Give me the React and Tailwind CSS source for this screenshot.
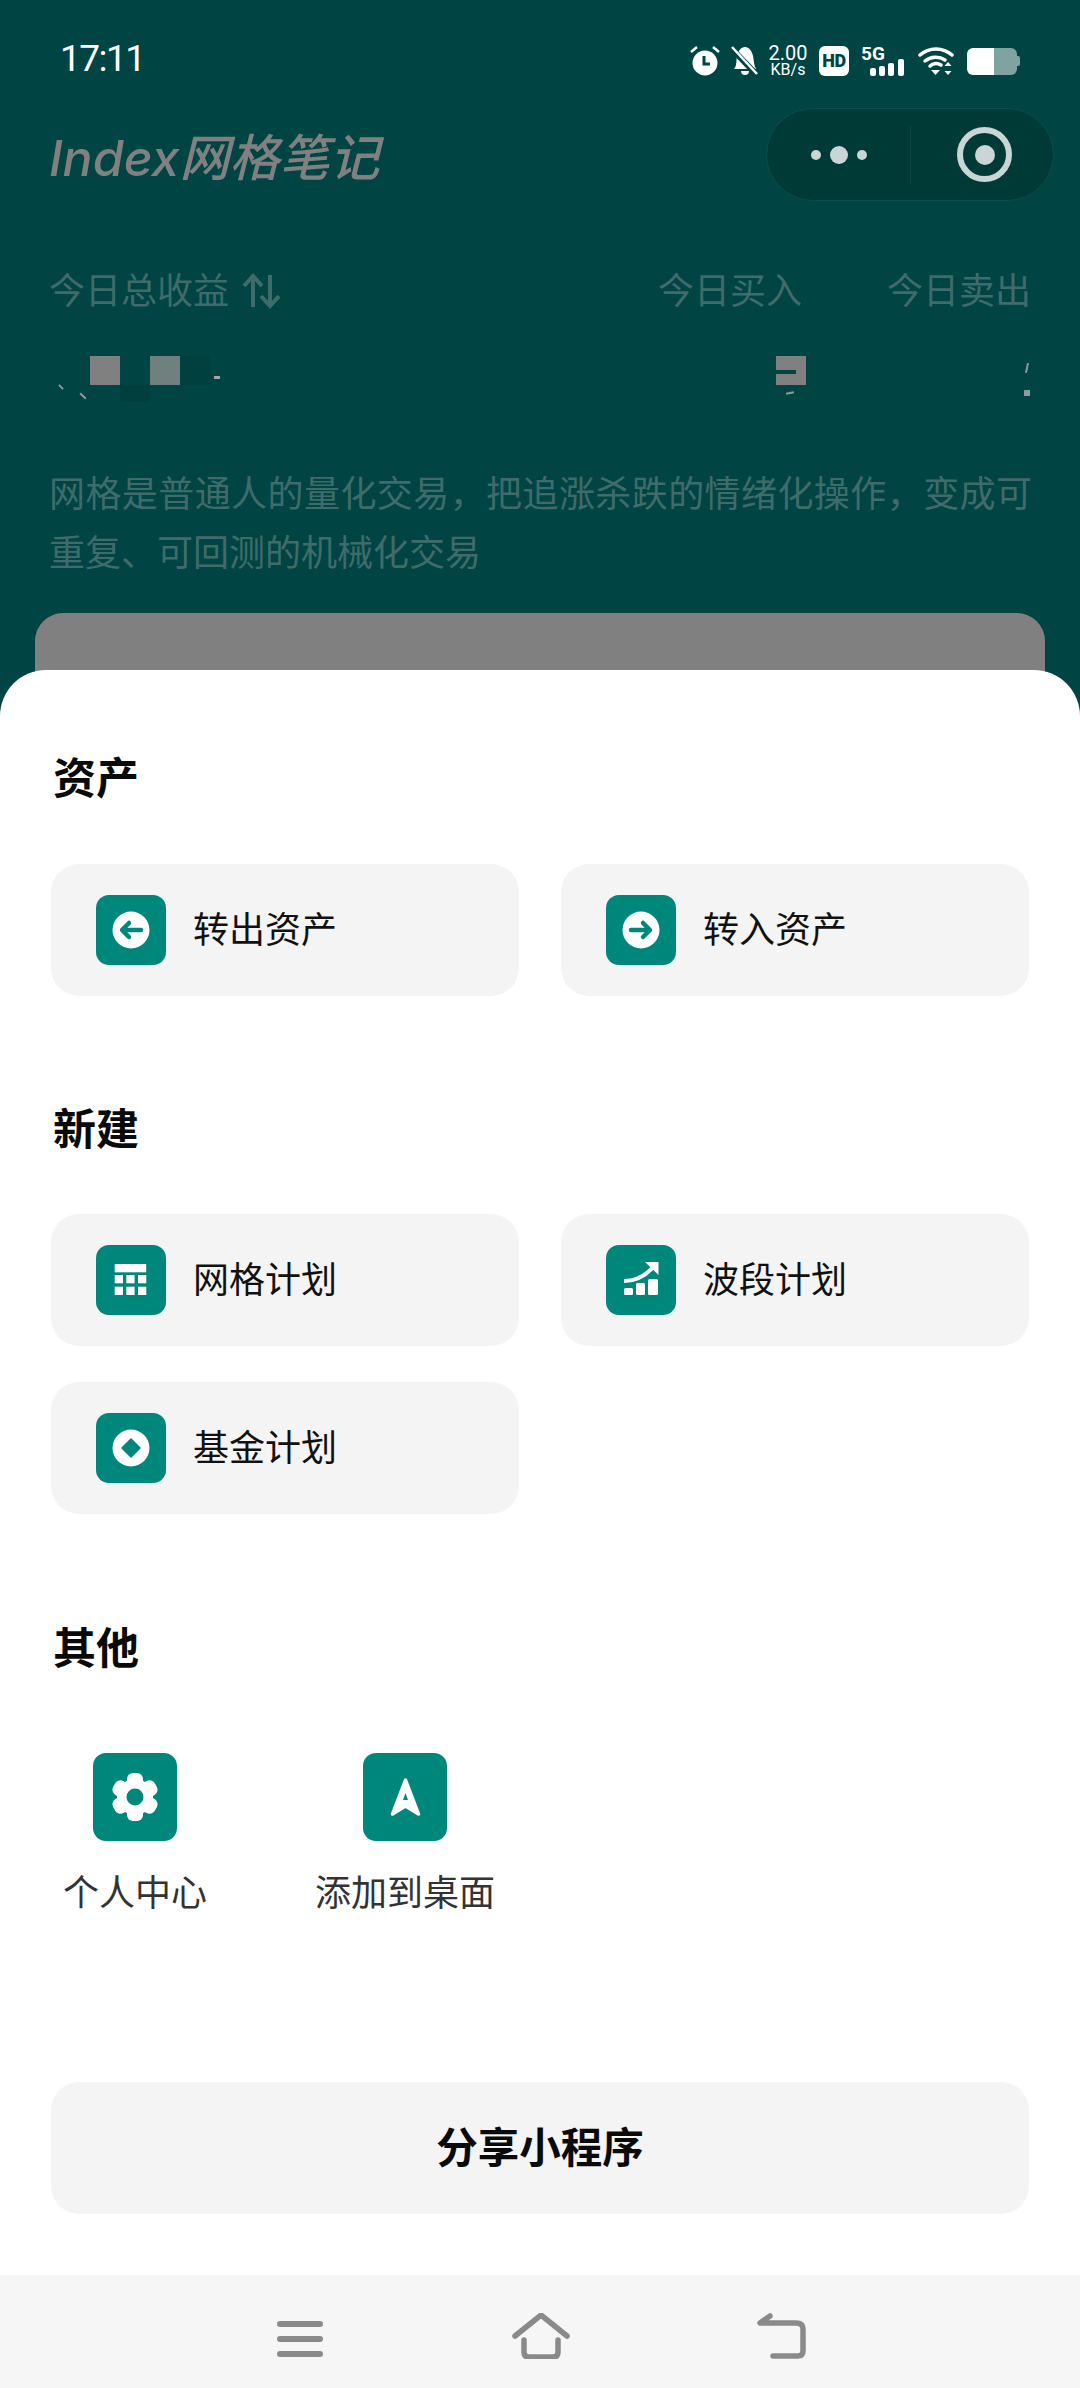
import { useState } from "react";

const FONT = "font-['Inter','Noto_Sans_CJK_SC',sans-serif]";

function IconBox({ className, children }) {
  return (
    <svg viewBox="0 0 70 70" className={`h-[70px] w-[70px] shrink-0 ${className || ""}`}>
      <rect width="70" height="70" rx="13" fill="#00877b" />
      {children}
    </svg>
  );
}

const ArrowLeftIcon = () => (
  <IconBox>
    <circle cx="35" cy="35" r="18.5" fill="#fff" />
    <path d="M45 35H27M33 28l-7 7 7 7" fill="none" stroke="#00877b" strokeWidth="4.5" strokeLinecap="round" strokeLinejoin="round" />
  </IconBox>
);

const ArrowRightIcon = () => (
  <IconBox>
    <circle cx="35" cy="35" r="18.5" fill="#fff" />
    <path d="M25 35h18M37 28l7 7-7 7" fill="none" stroke="#00877b" strokeWidth="4.5" strokeLinecap="round" strokeLinejoin="round" />
  </IconBox>
);

const GridIcon = () => (
  <IconBox>
    <rect x="18.7" y="19" width="31.5" height="8.3" fill="#fff" />
    {[18.7, 30.3, 42].map((x) =>
      [30, 41.7].map((y) => <rect key={`${x}-${y}`} x={x} y={y} width="8.3" height="8.3" fill="#fff" />)
    )}
  </IconBox>
);

const ChartIcon = () => (
  <IconBox>
    <rect x="18" y="43" width="9" height="7" rx="1.5" fill="#fff" />
    <rect x="30" y="38" width="9" height="12" rx="1.5" fill="#fff" />
    <rect x="42" y="34" width="10" height="16" rx="1.5" fill="#fff" />
    <path d="M18 36c12 0 22-5 31-16" fill="none" stroke="#fff" strokeWidth="4" />
    <path d="M39 17h13.5v13z" fill="#fff" />
  </IconBox>
);

const CoinIcon = () => (
  <IconBox>
    <circle cx="35" cy="35" r="18.5" fill="#fff" />
    <path d="M35 26l9 9-9 9-9-9z" fill="#00877b" stroke="#00877b" strokeWidth="1.5" strokeLinejoin="round" />
  </IconBox>
);

const GearIcon = () => (
  <svg viewBox="0 0 84 88" className="h-[88px] w-[84px]">
    <rect width="84" height="88" rx="13" fill="#00877b" />
    <circle cx="42" cy="44" r="18" fill="#fff" />
    {[0, 60, 120].map((a) => (
      <rect key={a} x="34" y="20" width="16" height="48" rx="6" fill="#fff" transform={`rotate(${a} 42 44)`} />
    ))}
    <circle cx="42" cy="44" r="8.5" fill="#00877b" />
  </svg>
);

const NavArrowIcon = () => (
  <svg viewBox="0 0 84 88" className="h-[88px] w-[84px]">
    <rect width="84" height="88" rx="13" fill="#00877b" />
    <path d="M42.5 27 55.5 61 42.5 53 29.5 61z" fill="#fff" stroke="#fff" strokeWidth="3.5" strokeLinejoin="round" />
    <path d="M42.5 40 45 47h-5z" fill="#00877b" />
  </svg>
);

function ActionCard({ icon, label }) {
  return (
    <button className="flex h-[132px] items-center gap-[27px] rounded-[28px] bg-[#f4f4f4] pl-[45px] text-[36px] text-[#111]">
      {icon}
      <span>{label}</span>
    </button>
  );
}

function SectionTitle({ children }) {
  return <h3 className="pl-[53px] text-[43px] leading-[60px] font-semibold text-[#0a0a0a]">{children}</h3>;
}

function StatusIcons() {
  return (
    <div className="flex items-center text-white">
      <svg viewBox="0 0 30 30" className="h-[30px] w-[30px]">
        <circle cx="15" cy="17" r="12.5" fill="#fff" />
        <path d="M14 10v8h6" fill="none" stroke="#004443" strokeWidth="3" />
        <path d="M1 6l6-5M29 6l-6-5" stroke="#fff" strokeWidth="2.5" />
      </svg>
      <svg viewBox="0 0 28 30" className="ml-[10px] h-[30px] w-[28px]">
        <path d="M4 23c3-3 2-8 3-13 1-5 4-9 8-9s7 4 8 9c1 5 1 10 3 13z" fill="#fff" />
        <path d="M11 25h8a4 4 0 0 1-8 0z" fill="#fff" />
        <path d="M1 2l26 27" stroke="#004443" strokeWidth="6" />
        <path d="M2 1l25 27" stroke="#fff" strokeWidth="2.5" />
      </svg>
      <div className="ml-[10px] flex w-[40px] flex-col items-center font-['Roboto',sans-serif] leading-none">
        <span className="text-[20px] leading-[17px]">2.00</span>
        <span className="text-[16px] leading-[15px]">KB/s</span>
      </div>
      <div className="ml-[11px] flex h-[30px] w-[30px] items-center justify-center rounded-[6px] bg-white font-['Roboto',sans-serif] text-[18px] leading-none font-black tracking-[-0.5px] text-[#004443]">
        HD
      </div>
      <div className="relative ml-[12px] h-[30px] w-[44px]">
        <span className="absolute top-0 left-0 font-['Roboto',sans-serif] text-[19px] leading-[16px] font-bold">5G</span>
        <svg viewBox="0 0 35 17" className="absolute right-0 bottom-0 h-[17px] w-[35px]">
          <rect x="0" y="9" width="6" height="8" rx="2" fill="#fff" />
          <rect x="9" y="7" width="6" height="10" rx="2" fill="#fff" />
          <rect x="18" y="4" width="6" height="13" rx="2" fill="#fff" />
          <rect x="28" y="0" width="6" height="17" rx="2" fill="#fff" />
        </svg>
      </div>
      <svg viewBox="0 0 36 30" className="ml-[13px] h-[30px] w-[36px]">
        <path d="M2 9a24 24 0 0 1 32 0" fill="none" stroke="#fff" strokeWidth="3.5" strokeLinecap="round" />
        <path d="M7 15a17 17 0 0 1 20-1" fill="none" stroke="#fff" strokeWidth="3.5" strokeLinecap="round" />
        <path d="M12 20a9 9 0 0 1 11-1" fill="none" stroke="#fff" strokeWidth="3.5" strokeLinecap="round" />
        <path d="M13 24h9l-4.5 5z" fill="#fff" />
        <path d="M30 16l3.5 4h-7zM30 29l3.5-4h-7z" fill="#fff" />
      </svg>
      <div className="ml-[13px] flex h-[27px] items-center">
        <div className="flex h-[27px] w-[50px] overflow-hidden rounded-[6px]">
          <div className="w-[27px] bg-white" />
          <div className="flex-1 bg-[#7fa3a1]" />
        </div>
        <div className="h-[10px] w-[3px] rounded-r-[2px] bg-[#7fa3a1]" />
      </div>
    </div>
  );
}

export default function App() {
  const [sheetOpen] = useState(true);

  return (
    <div className={`relative h-[2388px] w-[1080px] overflow-hidden bg-[#004443] ${FONT}`}>
      {/* page behind the sheet, dimmed */}
      <div className="flex h-[88px] items-end justify-between pr-[60px] pb-[11px] pl-[60px]">
        <span className="mb-[-2px] font-['Roboto',sans-serif] text-[37px] leading-[40px] tracking-[-1.5px] text-white">17:11</span>
        <StatusIcons />
      </div>

      <div className="mt-[20px] flex items-center justify-between pr-[26px] pl-[49px]">
        <h1 className="mt-[6px] text-[50px] leading-none font-medium text-[#808080] italic">Index网格笔记</h1>
        <div className="flex h-[93px] w-[288px] items-center rounded-full border border-[#07504d] bg-[#003a37]">
          <div className="flex w-[143px] items-center justify-center gap-[9px]">
            <span className="h-[10px] w-[10px] rounded-full bg-[#c9d6d5]" />
            <span className="h-[18px] w-[18px] rounded-full bg-[#c9d6d5]" />
            <span className="h-[10px] w-[10px] rounded-full bg-[#c9d6d5]" />
          </div>
          <div className="h-[58px] w-px bg-[#0a4744]" />
          <div className="flex flex-1 items-center justify-center pl-[5px]">
            <div className="flex h-[55px] w-[55px] items-center justify-center rounded-full border-[6px] border-[#c9d6d5]">
              <span className="h-[20px] w-[20px] rounded-full bg-[#c9d6d5]" />
            </div>
          </div>
        </div>
      </div>

      <div className="mt-[65px] flex items-center pr-[49px] pl-[49px] text-[36px] leading-[50px] text-[#3f6c6a]">
        <div className="flex items-center gap-[13px]">
          <span>今日总收益</span>
          <svg viewBox="0 0 38 36" className="h-[36px] w-[38px]">
            <path d="M11 34V4M2 13l9-10 9 10" fill="none" stroke="#3f6c6a" strokeWidth="4" />
            <path d="M28 2v30M19 23l9 10 9-10" fill="none" stroke="#3f6c6a" strokeWidth="4" />
          </svg>
        </div>
        <span className="ml-auto">今日买入</span>
        <span className="ml-[85px]">今日卖出</span>
      </div>

      {/* masked amounts */}
      <div className="mt-[40px] flex h-[46px] pr-[50px] pl-[60px]">
        <span className="mt-[28px] h-[6px] w-[2px] -rotate-45 bg-[#909a99]" />
        <span className="mt-[36px] ml-[20px] h-[8px] w-[2px] -rotate-45 bg-[#909a99]" />
        <div className="ml-[6px] h-[29px] w-[30px] bg-[#808080]" />
        <div className="mt-[29px] h-[17px] w-[30px] bg-[#003f3d]" />
        <div className="h-[29px] w-[30px] bg-[#6f807e]" />
        <div className="h-[29px] w-[30px] bg-[#004140]" />
        <span className="mt-[20px] ml-[4px] h-[3px] w-[6px] bg-[#a0a8a7]" />
        <div className="relative ml-[556px] h-[29px] w-[30px] bg-[#808080]">
          <span className="absolute top-[14px] left-0 h-[4px] w-[20px] bg-[#004443]" />
          <span className="absolute top-[36px] left-[10px] h-[2px] w-[8px] -rotate-12 bg-[#909a99]" />
        </div>
        <div className="ml-auto flex flex-col items-center">
          <span className="mt-[7px] h-[10px] w-[2px] rotate-12 bg-[#909a99]" />
          <span className="mt-[17px] h-[6px] w-[6px] bg-[#909a99]" />
        </div>
      </div>

      <p className="mt-[63px] w-[1032px] pl-[49px] text-justify text-[36px] leading-[59px] text-[#3f6c6a]">
        网格是普通人的量化交易，把追涨杀跌的情绪化操作，变成可重复、可回测的机械化交易
      </p>

      <div className="mx-[35px] mt-[30px] h-[80px] rounded-t-[28px] bg-[#808080]" />

      {sheetOpen && (
        <div className="absolute inset-x-0 top-[670px] bottom-0 flex flex-col overflow-hidden rounded-t-[46px] bg-white">
          <div className="flex-1 pt-[78px]">
            <SectionTitle>资产</SectionTitle>
            <div className="mt-[56px] grid grid-cols-2 gap-x-[42px] gap-y-[36px] px-[51px]">
              <ActionCard icon={<ArrowLeftIcon />} label="转出资产" />
              <ActionCard icon={<ArrowRightIcon />} label="转入资产" />
            </div>

            <div className="mt-[103px]">
              <SectionTitle>新建</SectionTitle>
            </div>
            <div className="mt-[55px] grid grid-cols-2 gap-x-[42px] gap-y-[36px] px-[51px]">
              <ActionCard icon={<GridIcon />} label="网格计划" />
              <ActionCard icon={<ChartIcon />} label="波段计划" />
              <ActionCard icon={<CoinIcon />} label="基金计划" />
            </div>

            <div className="mt-[104px]">
              <SectionTitle>其他</SectionTitle>
            </div>
            <div className="mt-[75px] flex text-[36px] leading-[50px] text-[#333]">
              <div className="flex w-[270px] flex-col items-center gap-[27px]">
                <GearIcon />
                <span>个人中心</span>
              </div>
              <div className="flex w-[270px] flex-col items-center gap-[27px]">
                <NavArrowIcon />
                <span>添加到桌面</span>
              </div>
            </div>

            <button className="mx-[51px] mt-[164px] flex h-[132px] w-[978px] items-center justify-center rounded-[28px] bg-[#f4f4f4] text-[41.5px] font-semibold text-[#0a0a0a]">
              分享小程序
            </button>
          </div>

          {/* android nav bar */}
          <div className="flex h-[113px] items-center bg-[#f6f6f6] pt-[9px] pl-[277px]">
            <svg viewBox="0 0 46 36" className="mt-[6px] h-[36px] w-[46px]">
              <path d="M3 3h40M3 18h40M3 33h40" stroke="#8a8a8a" strokeWidth="6" strokeLinecap="round" />
            </svg>
            <svg viewBox="0 0 58 46" className="ml-[189px] h-[46px] w-[58px]">
              <path d="M3 23 29 2l26 21" fill="none" stroke="#8a8a8a" strokeWidth="5.5" strokeLinecap="round" strokeLinejoin="round" />
              <path d="M12 27v12q0 5 5 5h24q5 0 5-5V27" fill="none" stroke="#8a8a8a" strokeWidth="5.5" strokeLinecap="round" />
            </svg>
            <svg viewBox="0 0 50 46" className="ml-[186px] h-[46px] w-[50px]">
              <path d="M14 3 4 10h36q7 0 7 6v22q0 5-5 5H17" fill="none" stroke="#8a8a8a" strokeWidth="5.5" strokeLinecap="round" strokeLinejoin="round" />
            </svg>
          </div>
        </div>
      )}
    </div>
  );
}
